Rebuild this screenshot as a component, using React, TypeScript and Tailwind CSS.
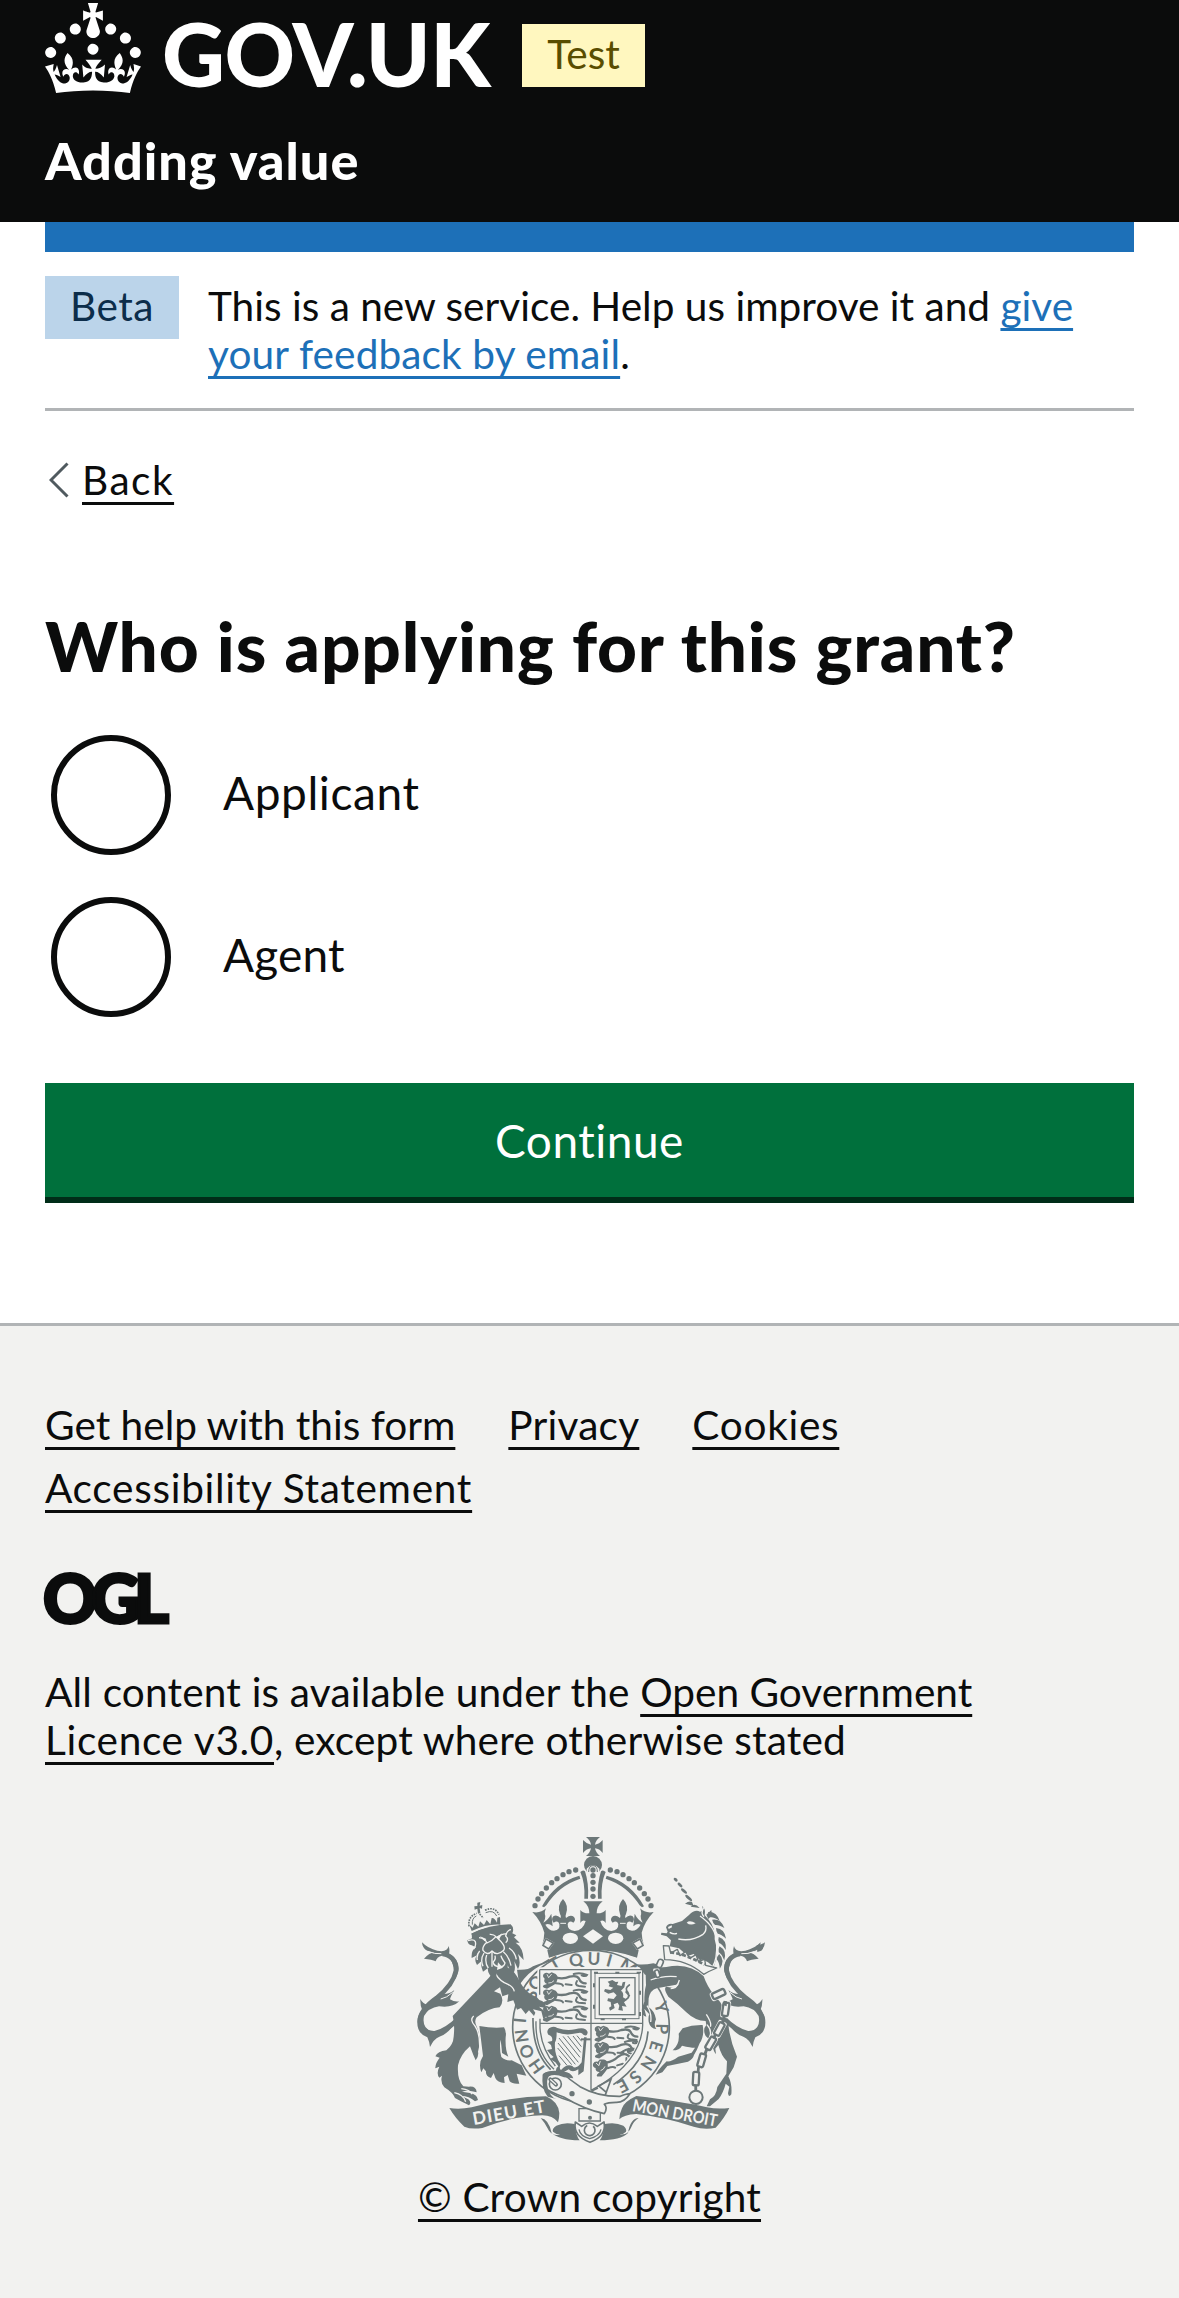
import type { ReactNode } from 'react';

const CREST = '#6c7778';
const PAPER = '#f2f2f0';

function Crown() {
  return (
    <svg viewBox="0 0 32 30" className="mt-[3px] h-[90px] w-24 shrink-0 fill-white" aria-hidden="true">
      <path d="M22.6 10.4c-1 .4-2-.1-2.4-1-.4-.9.1-2 1-2.4.9-.4 2 .1 2.4 1s-.1 2-1 2.4m-5.9 6.7c-.9.4-2-.1-2.4-1-.4-.9.1-2 1-2.4.9-.4 2 .1 2.4 1s-.1 2-1 2.4m10.8-3.7c-1 .4-2-.1-2.4-1-.4-.9.1-2 1-2.4.9-.4 2 .1 2.4 1s0 2-1 2.4m3.3 4.8c-1 .4-2-.1-2.4-1-.4-.9.1-2 1-2.4.9-.4 2 .1 2.4 1s-.1 2-1 2.4M17 4.7l2.3 1.2V2.5l-2.3.7-.2-.2.9-3h-3.4l.9 3-.2.2c-.1.1-2.3-.7-2.3-.7v3.4L15 4.7c.1.1.1.2.2.2l-1.3 4c-.1.2-.1.4-.1.6 0 1.1.8 2 1.9 2.2h.7c1-.2 1.9-1.1 1.9-2.1 0-.2 0-.4-.1-.6l-1.3-4c-.1-.2 0-.2.1-.3m-7.6 5.7c.9.4 2-.1 2.4-1 .4-.9-.1-2-1-2.4-.9-.4-2 .1-2.4 1s0 2 1 2.4m-5 3c.9.4 2-.1 2.4-1 .4-.9-.1-2-1-2.4-.9-.4-2 .1-2.4 1s.1 2 1 2.4m-3.2 4.8c.9.4 2-.1 2.4-1 .4-.9-.1-2-1-2.4-.9-.4-2 .1-2.4 1s0 2 1 2.4m14.8 11c4.4 0 8.6.3 12.3.8 1.1-4.5 2.4-7 3.7-8.8l-2.5-.9c.2 1.3.3 1.9 0 2.7-.4-.4-.8-1.1-1.1-2.3l-1.2 4c.7-.5 1.3-.8 2-.9-1.1 2.5-2.6 3.1-3.5 3-1.1-.2-1.7-1.2-1.5-2.1.3-1.2 1.5-1.5 2.1-.1 1.1-2.3-.8-3-2-2.3 1.9-1.9 2.1-3.5.6-5.6-2.1 1.6-2.1 3.2-1.2 5.5-1.2-1.4-3.2-.6-2.5 1.6.9-1.4 2.1-.5 1.9.8-.2 1.1-1.7 2.1-3.5 1.9-2.7-.2-2.9-2.1-2.9-3.6.7-.1 1.9.5 2.9 1.9l.4-4.3c-1.1 1.1-2.1 1.4-3.2 1.4.4-1.2 2.1-3 2.1-3h-5.4s1.7 1.9 2.1 3c-1.1 0-2.1-.2-3.2-1.4l.4 4.3c1-1.4 2.2-2 2.9-1.9-.1 1.5-.2 3.4-2.9 3.6-1.9.2-3.4-.8-3.5-1.9-.2-1.3 1-2.2 1.9-.8.7-2.3-1.2-3-2.5-1.6.9-2.2.9-3.9-1.2-5.5-1.5 2-1.3 3.7.6 5.6-1.2-.7-3.1 0-2 2.3.6-1.4 1.8-1.1 2.1.1.2.9-.3 1.9-1.5 2.1-.9.2-2.4-.5-3.5-3 .6 0 1.2.3 2 .9l-1.2-4c-.3 1.1-.7 1.9-1.1 2.3-.3-.8-.2-1.4 0-2.7l-2.9.9C1.3 23 2.6 25.5 3.7 30c3.7-.5 7.9-.8 12.3-.8" />
    </svg>
  );
}

/* Letters of the garter motto, placed round the ring */
const MOTTO: [string, number, number][] = [
  ['H', 410, 744], ['O', 381, 700], ['N', 366, 654], ['I', 360, 607],
  ['S', 394, 529], ['O', 408, 494], ['T', 464, 438],
  ['Q', 528, 426], ['U', 582, 422], ['I', 628, 428], ['M', 686, 446],
  ['Y', 784, 568], ['P', 786, 632], ['E', 768, 685], ['N', 745, 735], ['S', 706, 777], ['E', 668, 803],
];

const PEARLS = [[527, 156], [507, 161], [489, 170], [471, 182], [455, 194], [439, 210], [425, 227], [414, 243], [405, 263]];

const HORN = [[827, 185, 7], [840, 201, 9], [852, 219, 11], [866, 240, 13]];

const LINKS = [[956, 528, 65], [977, 574, 8], [958, 633, 28], [932, 676, 30], [905, 727, 16], [888, 782, 3]];

function CrownHalf() {
  return (
    <g>
      {PEARLS.map(([x, y]) => (
        <circle key={x} cx={x} cy={y} r={8} />
      ))}
      <path d="M426 265Q464 194 538 173L541 182Q476 203 439 262L432 268Z" />
      <path d="M541 162Q549 154 555 160Q567 196 564 242H553Q556 196 541 162Z" />
      <path d="M397 282Q422 287 438 271Q432 284 436 294Q437 302 430 314Q445 305 454 287L458 325Q446 314 436 320Q446 338 462 338Q481 336 478 318Q474 306 461 314Q452 304 460 295Q470 288 482 300Q484 294 480 288Q470 262 489 243Q507 262 498 288Q495 295 498 300Q512 288 522 297Q529 306 520 314Q508 306 503 318Q502 337 524 339Q549 338 557 309Q546 304 541 315V276Q550 287 568 286Q568 264 550 250H579V396Q510 396 447 419L442 397Q450 385 458 373L438 360L426 383L431 363L433 344Q424 310 397 282Z" />
      <g fill={PAPER}>
        <path d="M423 383L437 359L463 374L447 396Z" />
        <ellipse cx="511" cy="361" rx="23" ry="17" />
        <path d="M579 334L549 355L579 377Z" />
      </g>
      <path fill="none" stroke={CREST} strokeWidth="5" d="M429 382L438 363L460 375L446 393Z" />
      <path fill="none" stroke={PAPER} strokeWidth="3" d="M481 316H498" />
    </g>
  );
}

function Tail() {
  return (
    <g>
      <path fill="none" stroke={CREST} strokeWidth="14" d="M128 408Q170 415 168 458Q160 500 110 540Q60 575 60 610Q64 648 105 646Q140 638 178 600" />
      <path d="M66 373Q84 392 112 398Q142 404 146 384Q150 398 147 407Q177 425 176 452Q174 490 118 527Q146 532 163 516Q152 535 150 544Q164 553 178 550Q156 571 117 565Q85 570 72 594Q65 630 94 640Q134 644 180 592Q150 647 118 656Q101 663 90 687Q88 670 82 658Q46 645 53 600Q57 585 67 577Q60 561 61 543Q68 557 82 561Q100 540 138 512Q166 484 161 448Q154 412 126 413Q110 417 107 430Q96 424 72 422Q90 402 105 404Q68 402 66 373Z" />
      <path fill="none" stroke={PAPER} strokeWidth="3" d="M84 400Q104 409 124 407M158 523Q140 540 122 543" />
    </g>
  );
}

function LionPassant({ x, y, tilt = 0 }: { x: number; y: number; tilt?: number }) {
  return (
    <g transform={`translate(${x} ${y}) rotate(${tilt})`}>
      <path d="M-2 -20Q6 -27 14 -21L22 -25L34 -20Q44 -12 38 0Q36 10 24 15L8 24L-1 21Q-8 18 -1 13L8 10Q-4 4 1 -6Q-7 -12 -2 -20Z" />
      <path fill="none" stroke={CREST} strokeWidth="7" strokeLinecap="round" d="M36 -9Q58 -4 76 -12Q98 -17 104 -6Q110 8 124 8" />
      <path fill="none" stroke={CREST} strokeWidth="6" strokeLinecap="round" d="M34 8Q52 8 56 15M64 11L82 13M98 1Q90 14 104 16L122 18M88 -20Q108 -26 128 -17Q124 -11 112 -16" />
      <path fill="none" stroke={PAPER} strokeWidth="2.500" d="M8 -19L13 -9L22 -20M12 7Q22 8 29 0" />
    </g>
  );
}

function Lion() {
  return (
    <g>
      <path d="M351 455Q383 458 399 445Q425 438 446 423Q457 430 420 443Q383 463 358 501Z" />
      <path d="M266 480L158 594Q165 619 161 656Q160 680 139 697Q113 700 106 715L119 719Q105 737 106 751L118 746Q108 767 118 779L126 773Q120 793 133 808Q159 824 165 840Q182 850 207 862Q216 853 205 844L184 834Q207 834 225 850L234 846Q232 829 210 825L186 821Q204 815 230 823Q229 804 207 806L190 805Q171 786 174 742Q181 710 210 685L220 711L227 727Q237 715 234 701Q245 665 231 628Q221 610 230 598Q268 569 299 568Q314 549 301 527L282 520L300 508L307 535L325 529L322 552L340 547L351 575L363 570L377 588L387 577L402 594L406 584L399 574L424 580L430 603L438 597L434 580L417 566L437 570Q438 550 418 546L410 537Q380 527 361 494Q343 454 317 446L283 459Z" />
      <path d="M238 624Q276 631 312 628Q320 641 317 657Q315 694 325 716L306 705Q304 675 301 665Q298 697 304 717Q316 729 335 727L365 742L379 773L350 767L358 797Q337 799 329 790L323 771L312 778L314 795Q292 793 286 780L281 765L273 780Q256 774 258 760L250 751L244 763Q234 736 249 714Z" />
      <path fill="none" stroke={PAPER} strokeWidth="4" d="M286 466Q299 490 324 499Q340 507 343 520M221 594Q208 606 225 624Q240 645 239 689M184 812Q210 815 216 829M163 824Q190 830 197 851" />
      <path d="M215 347Q267 320 332 319Q344 330 337 346L349 352L342 358L359 374L347 374Q370 389 371 426L354 408Q364 436 354 454L343 430Q349 464 335 468L323 442Q325 462 310 451L294 433L287 488Q263 471 263 451L249 461Q241 443 244 430L231 441Q221 426 231 412L215 420Q213 397 228 388L215 382Q203 381 202 367L216 361Z" />
      <g fill="none" stroke={PAPER} strokeWidth="4" strokeLinejoin="round">
        <path d="M204 368Q221 362 226 371Q229 385 221 393M333 335Q321 336 317 354Q328 365 317 374" />
        <path d="M237 359Q255 361 261 375Q278 368 288 356Q281 348 269 349M292 358Q309 345 320 348M261 372Q246 386 249 397Q262 415 276 399Q291 416 311 397Q319 385 296 364M252 405Q240 424 249 445M260 411Q253 433 265 450M276 403V446M310 401Q327 415 333 443M327 390Q345 402 349 424M239 399Q229 410 232 426" />
        <path d="M285 413Q288 426 279 432Q282 446 299 446Q312 447 315 435Q304 420 303 413" />
      </g>
      <path fill={PAPER} d="M240 355L259 363L254 370ZM287 358L307 346L296 367Z" />
      <path d="M215 339Q262 317 301 320L300 297L292 299L291 314Q284 299 275 300L271 319L260 306L252 321L240 310L235 326L224 316L218 329L208 320Z" />
      <path d="M232 254L241 252L239 263L247 261L246 272L239 270L241 285L234 287L232 272L224 275L223 265L232 264Z" />
      <path fill="none" stroke={CREST} strokeWidth="5" strokeDasharray="5 3" d="M207 325Q203 296 230 286M255 277Q284 263 297 290M239 288L250 300" />
      <path fill="none" stroke={CREST} strokeWidth="3" d="M214 348Q260 326 303 328M217 320Q215 300 229 294M257 284Q281 274 290 294" />
    </g>
  );
}

function Unicorn() {
  return (
    <g>
      {HORN.map(([x, y, r]) => (
        <ellipse key={x} cx={x} cy={y} rx={r} ry={4.5} transform={`rotate(42 ${x} ${y})`} />
      ))}
      <path d="M855 257Q867 248 876 252L881 264ZM872 266Q884 252 899 270ZM906 264Q918 272 914 292L925 304Q947 331 944 364Q958 409 941 447L924 433Q908 422 900 427L881 408L863 414L837 391L809 385L813 367L800 355L783 350L784 344L800 346L803 341L798 328Q803 315 818 318L846 309L867 291Q885 273 900 281Q912 280 906 264Z" />
      <path fill={PAPER} d="M860 314Q869 305 887 316Q871 324 860 314ZM804 327L815 322L816 328L806 333Z" />
      <path fill="none" stroke={PAPER} strokeWidth="4" d="M911 268Q901 286 912 296M809 343Q821 350 831 346M835 363Q876 371 909 349Q921 338 917 322M900 294Q949 328 950 375Q952 423 938 446" />
      {[[944, 293, 44], [957, 315, 40], [966, 344, 54], [970, 375, 68], [969, 405, 78], [962, 430, 94]].map(([x, y, a]) => (
        <path key={y} transform={`translate(${x} ${y}) rotate(${a})`} d="M-22 6Q-5 -14 22 1Q2 4 -5 12Q-13 13 -22 6Z" />
      ))}
      <path d="M919 290L934 276L936 292L925 303Z" />
      <path d="M737 470Q755 448 799 447Q867 432 911 475Q922 507 943 532Q981 570 985 618Q989 665 1011 716L1001 748L985 775Q997 799 994 829Q986 840 984 826L988 806L977 797Q970 824 956 843L930 865H920L930 844Q949 834 952 807L979 767L981 730Q964 714 955 681L946 692L948 709Q938 698 936 672L917 654Q907 634 919 621L917 609Q886 609 859 583Q835 558 805 536Q790 514 798 506L826 511L837 499L770 511Q751 516 746 541L745 567Q764 578 768 604Q760 622 769 633Q751 632 746 612Q744 595 748 589L733 572L739 596Q723 594 726 570L733 551Q733 520 738 502Z" />
      <path d="M848 631Q877 620 908 621Q914 654 899 676Q891 697 882 711Q879 724 864 731L802 744L787 763L767 770Q776 754 786 744L800 730Q812 733 835 716L875 704L885 689Q877 690 846 683Q839 697 818 697Q840 677 836 647Z" />
      <path fill="none" stroke={PAPER} strokeWidth="4" d="M752 486Q789 472 830 476M838 486Q832 511 812 512M741 563Q756 585 752 612M921 620Q938 640 928 659M919 589Q936 615 931 626" />
      <path fill={PAPER} stroke={CREST} strokeWidth="4" strokeLinejoin="round" d="M790 383L807 384L812 405L832 394L840 413L857 401L869 421L888 410L895 430L914 424L917 442L950 450Q928 459 911 469Q861 425 794 425Z" />
      <path fill="none" stroke={CREST} strokeWidth="8" strokeDasharray="12 6" d="M811 403Q855 408 914 440" />
      <g fill={PAPER} stroke={CREST} strokeWidth="5">
        <rect x="772" y="424" width="16" height="25" rx="7" transform="rotate(24 780 436)" />
        <rect x="757" y="449" width="24" height="14" rx="6" />
        <rect x="766" y="456" width="12" height="22" rx="5" transform="rotate(-18 772 467)" />
      </g>
      {LINKS.map(([x, y, a]) => (
        <g key={y} transform={`translate(${x} ${y}) rotate(${a})`}>
          <rect x="-14" y="-26" width="28" height="52" rx="7" fill={PAPER} />
          <rect x="-9" y="-20" width="18" height="40" rx="5" fill={PAPER} stroke={CREST} strokeWidth="7" />
        </g>
      ))}
      <path d="M971 548L981 550L980 565L971 562ZM968 595L977 598L972 617L963 614ZM943 646L951 650L944 664L937 660ZM917 690L925 694L919 710L911 706ZM892 743L900 746L898 764L890 762ZM883 800H891L892 821H883Z" />
      <circle cx="888" cy="838" r="20" fill={PAPER} stroke={CREST} strokeWidth="6" />
    </g>
  );
}

function Shield() {
  return (
    <g>
      <clipPath id="lower-quarter">
        <path d="M577 620H724V626Q718 718 602 794L577 808Z" />
      </clipPath>
      <path fill={PAPER} stroke={PAPER} strokeWidth="14" d="M419 455H728V622Q726 717 573 813Q419 717 419 622Z" />
      <path fill="none" stroke={CREST} strokeWidth="4" d="M419 455H728V622Q724 722 604 800L573 817M419 455V530M420 602V630Q424 692 466 744M573 455V817M419 616H728M408 610Q405 700 462 754" />
      <path fill="none" stroke={CREST} strokeWidth="5" d="M399 600Q397 700 452 755M744 640Q737 735 640 800" />
      <LionPassant x={433} y={488} />
      <LionPassant x={433} y={538} />
      <LionPassant x={433} y={588} />
      <g clipPath="url(#lower-quarter)">
        <LionPassant x={588} y={648} />
        <LionPassant x={588} y={698} tilt={-4} />
        <LionPassant x={588} y={756} tilt={-22} />
      </g>
      <g fill="none" stroke={CREST}>
        <rect x="585" y="466" width="132" height="136" strokeWidth="3" />
        <rect x="598" y="479" width="107" height="111" strokeWidth="4" />
        <path strokeWidth="6" strokeDasharray="12 52" d="M582 464H720V604H582Z" />
      </g>
      <path d="M623 491L637 486L647 492L655 491L651 501L665 504L668 493L676 491L673 508L663 518Q672 523 669 538L681 545L672 553L680 566L666 564L669 578L655 576L658 563L653 554L641 559L644 570L630 578L627 569L634 565L632 552L622 549L624 541L641 543L650 532L641 523L625 527L612 520L615 513L631 516L640 509L626 505L629 498Z" />
      <path fill="none" stroke={CREST} strokeWidth="5" strokeLinecap="round" d="M668 548Q693 543 684 524Q672 511 688 501M678 522L688 533" />
      <path d="M447 631Q459 622 472 630Q500 640 525 634Q557 624 563 642Q562 657 550 650Q545 641 530 646Q496 654 470 643Q470 667 465 673Q462 710 482 739Q476 752 483 756Q500 736 517 744Q527 757 545 733L552 658H560L551 760L535 772V754Q517 766 506 754Q487 769 468 759Q467 750 475 745L466 733L450 723L461 717L450 707L441 696L456 693L453 681L442 672L456 669Q460 655 445 650Q438 640 447 631Z" />
      <path stroke={CREST} strokeWidth="3" d="M489 655L540 718M477 660L535 733M474 675L526 739M473 690L515 740M477 713L501 742M503 654L542 703M519 654L544 686M531 653L545 670" />
      <path d="M543 661H572V667H543Z" />
    </g>
  );
}

function Ribbons() {
  return (
    <g>
      <path d="M148 870Q178 875 215 868Q330 836 438 835Q474 850 478 885Q478 900 474 913Q458 892 427 892Q330 896 247 930Q213 935 193 926Q166 901 148 870Z" />
      <path d="M988 870Q952 874 921 868Q842 850 709 834Q672 851 666 871Q658 888 658 904Q671 890 709 888Q801 899 881 926Q914 936 947 929Q972 903 988 870Z" />
      <path d="M422 900Q446 903 455 945Q477 966 539 967Q528 955 524 918Q493 911 469 923Q455 932 459 941Q467 949 480 949Q462 956 447 938Q435 914 422 900ZM716 900Q691 901 684 945Q662 967 599 967Q610 955 614 918Q646 911 670 923Q681 932 678 941Q671 949 659 949Q684 953 694 927Q701 909 716 900Z" />
      <path fill={PAPER} stroke={CREST} strokeWidth="4" d="M537 872V909H601V872Z" />
      <circle cx="570" cy="899" r="6" />
      <path fill={PAPER} stroke={CREST} strokeWidth="5" strokeLinejoin="round" d="M526 912L545 925Q568 905 592 925L612 912Q620 955 570 973Q519 955 526 912Z" />
      <path fill="none" stroke={CREST} strokeWidth="4" d="M537 934Q540 954 569 962Q599 954 603 934" />
      <circle cx="569" cy="937" r="16" fill="none" stroke={CREST} strokeWidth="5" strokeDasharray="80 21" transform="rotate(-50 569 937)" />
      <path fill="none" stroke={CREST} strokeWidth="5" d="M570 820Q592 828 612 839L619 823L596 804L633 784L616 831M575 819L594 810" />
      <path fill={PAPER} stroke={CREST} strokeWidth="5" strokeLinejoin="round" d="M431 769Q447 758 487 765Q510 786 540 806Q593 836 661 835Q681 826 689 828Q673 854 648 853Q623 853 613 859Q624 868 613 887Q552 874 491 837Q450 822 432 808Z" />
      <path d="M428 770Q447 752 491 761Q513 762 520 781L492 778Q464 766 447 775Q437 786 444 812Q450 836 469 843L443 836Q423 812 428 770Z" />
      <circle cx="466" cy="798" r="18" fill={PAPER} stroke={CREST} strokeWidth="5" />
      <path stroke={CREST} strokeWidth="12" strokeLinecap="round" d="M451 784L468 800" />
      <path stroke={PAPER} strokeWidth="4" strokeLinecap="round" d="M452 785L467 799" />
      <circle cx="516" cy="827" r="8" />
      <circle cx="568" cy="852" r="8" />
      <g fill={PAPER} fontFamily="Lato" fontWeight="700">
        <text x="221" y="921" fontSize="53" textLength="220" transform="rotate(-10 221 921)">DIEU ET</text>
        <text x="695" y="879" fontSize="51" textLength="258" lengthAdjust="spacingAndGlyphs" transform="rotate(10.500 695 879)">MON DROIT</text>
      </g>
    </g>
  );
}

function RoyalArms() {
  return (
    <svg viewBox="0 0 1140 1020" className="h-[340px] w-[380px]" fill={CREST} role="img" aria-label="Royal coat of arms">
      <CrownHalf />
      <g transform="translate(1158 0) scale(-1 1)">
        <CrownHalf />
      </g>
      <circle cx="579" cy="141" r="27" />
      <path fill={PAPER} d="M560 152Q579 132 598 152V172H560Z" />
      <path d="M558 57H600Q587 67 585 80Q598 78 608 66V105Q598 92 585 91Q587 104 600 114H558Q571 104 573 91Q560 92 549 105V66Q560 78 573 80Q571 67 558 57Z" />
      {[156, 173, 193, 213, 235].map((y) => (
        <circle key={y} cx="579" cy={y} r="8" />
      ))}
      <path fill="none" stroke={CREST} strokeWidth="3" d="M566 162Q566 143 579 143Q592 143 592 162" />
      <path fill={PAPER} d="M447 421Q579 374 711 421L719 440H439Z" />
      <ellipse cx="573" cy="627" rx="235" ry="230" fill={PAPER} stroke={CREST} strokeWidth="5" />
      <g fontFamily="Lato" fontWeight="700" fontSize="52" textAnchor="middle">
        {MOTTO.map(([ch, x, y]) => {
          const turn = (Math.atan2(x - 573, 627 - y) * 180) / Math.PI;
          return (
            <text key={`${x}-${y}`} transform={`translate(${x} ${y}) rotate(${turn})`} y="18">
              {ch}
            </text>
          );
        })}
      </g>
      <Shield />
      <Tail />
      <g transform="translate(1148 0) scale(-1 1)">
        <Tail />
      </g>
      <path d="M1070 382Q1085 380 1095 373Q1094 388 1084 398L1072 402Z" />
      <path d="M712 439Q735 441 760 436L779 441L760 475L735 470Z" />
      <Lion />
      <Unicorn />
      <Ribbons />
    </svg>
  );
}

function Link({ children, className = '' }: { children: ReactNode; className?: string }) {
  return (
    <a href="#" className={`underline decoration-[3px] underline-offset-[7px] ${className}`}>
      {children}
    </a>
  );
}

function Radio({ label, tracking }: { label: string; tracking: string }) {
  return (
    <label className="flex h-[120px] items-center">
      <input type="radio" name="applicant" className="ml-1.5 size-[120px] shrink-0 appearance-none rounded-full border-[6px] border-[#0b0c0c]" />
      <span className={`mb-1 ml-[52px] text-[46px] leading-[60px] ${tracking}`}>{label}</span>
    </label>
  );
}

export default function App() {
  return (
    <div className="flex h-[2298px] flex-col overflow-hidden bg-white font-['Lato',sans-serif] text-[40.600px] leading-[48px] text-[#0b0c0c]">
      <header className="h-[222px] bg-[#0b0c0c] px-[45px] text-white">
        <div className="flex h-[130px]">
          <Crown />
          <span className="mt-[9px] ml-[21px] w-[360px] text-[87px] leading-[90px] font-black tracking-[-0.500px]">GOV.UK</span>
          <strong className="mt-6 flex h-[63px] w-[123px] justify-center bg-[#fff7bf] pt-1.5 font-normal text-[#594d00]">Test</strong>
        </div>
        <div className="text-[52.200px] leading-[60px] font-black tracking-[1px]">Adding value</div>
      </header>

      <div className="mx-[45px] h-[30px] shrink-0 bg-[#1d70b8]" />

      <div className="mx-[45px] mt-6 flex h-[135px] gap-[29px] border-b-[3px] border-[#b1b4b6]">
        <strong className="flex h-[63px] w-[134px] shrink-0 justify-center bg-[#bbd4ea] pt-1.5 font-normal text-[#0c2d4a]">
          <span className="tracking-[0.500px]">Beta</span>
        </strong>
        <p className="pt-1.5 whitespace-nowrap">
          This is a new service. Help us improve it and <Link className="text-[#1d70b8]">give</Link>
          <br />
          <Link className="tracking-[0.120px] text-[#1d70b8]">your feedback by email</Link>.
        </p>
      </div>

      <main className="px-[45px]">
        <div className="mt-[45px] flex h-12">
          <svg viewBox="0 0 20 36" className="mt-1.5 ml-1 h-9 w-5" fill="none" stroke="#505a5f" strokeWidth="3">
            <path d="M18.500 1.500L2 18L18.500 34.500" />
          </svg>
          <Link className="ml-[13px] tracking-[1.500px]">Back</Link>
        </div>

        <h1 className="mt-[104px] text-[69.300px] leading-[75px] font-black tracking-[0.850px] whitespace-nowrap">
          Who is applying for this grant?
        </h1>
        <div className="mt-[52px] flex flex-col gap-[42px]">
          <Radio label="Applicant" tracking="tracking-[0.600px]" />
          <Radio label="Agent" tracking="tracking-[0.180px]" />
        </div>

        <button className="mt-[66px] block h-[120px] w-full border-b-[6px] border-[#002d18] bg-[#00703c] pt-0.5 text-[46px] leading-[60px] tracking-[0.500px] text-white">
          Continue
        </button>
      </main>

      <footer className="mt-[120px] grow border-t-[3px] border-[#b1b4b6] bg-[#f2f2f0] px-[45px] pt-[75px]">
        <nav className="flex flex-wrap gap-x-[53px] gap-y-[15px]">
          <Link>Get help with this form</Link>
          <Link className="tracking-[0.220px]">Privacy</Link>
          <Link className="mr-40 tracking-[0.700px]">Cookies</Link>
          <Link className="tracking-[0.700px]">Accessibility Statement</Link>
        </nav>
        <div className="mt-[40px] -ml-0.5 h-[90px] text-[67px] leading-[90px] font-black tracking-[-6px] [-webkit-text-stroke:3px_#0b0c0c]">OGL</div>
        <p className="mt-[26px] tracking-[0.180px] whitespace-nowrap">
          All content is available under the <Link className="tracking-[0]">Open Government</Link>
          <br />
          <Link className="tracking-[0.660px]">Licence v3.0</Link>, except where otherwise stated
        </p>
        <div className="mt-[54px] flex flex-col items-center">
          <RoyalArms />
          <Link className="mt-[15px] tracking-[0.160px]">© Crown copyright</Link>
        </div>
      </footer>
    </div>
  );
}
